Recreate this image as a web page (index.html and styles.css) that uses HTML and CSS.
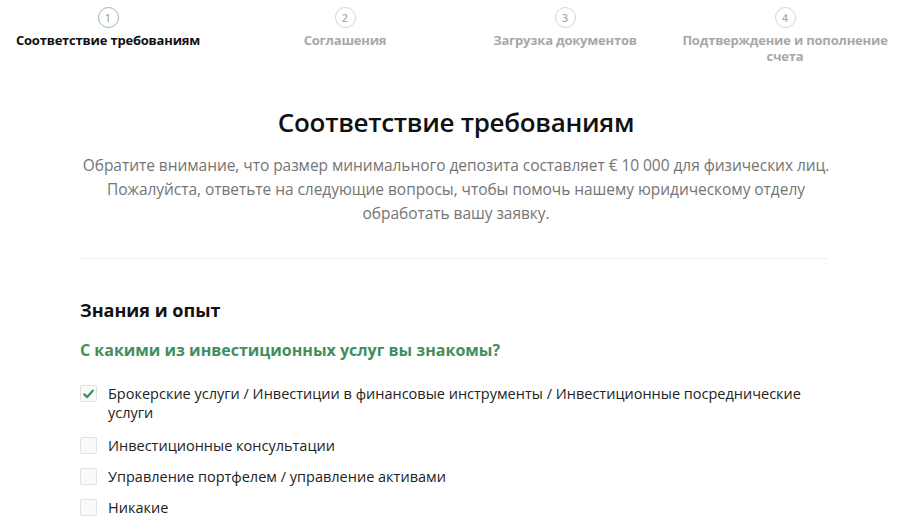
FILE: index.html
```html
<!DOCTYPE html>
<html lang="ru">
<head>
<meta charset="utf-8">
<title>Соответствие требованиям</title>
<link rel="stylesheet" href="styles.css">
</head>
<body>
<nav class="steps">
  <div class="step step-active step-first">
    <span class="step-num">1</span>
    <span class="step-label">Соответствие требованиям</span>
  </div>
  <div class="step">
    <span class="step-num">2</span>
    <span class="step-label">Соглашения</span>
  </div>
  <div class="step">
    <span class="step-num">3</span>
    <span class="step-label">Загрузка документов</span>
  </div>
  <div class="step">
    <span class="step-num">4</span>
    <span class="step-label">Подтверждение и пополнение счета</span>
  </div>
</nav>
<main class="content">
  <h1 class="title">Соответствие требованиям</h1>
  <p class="intro">Обратите внимание, что размер минимального депозита составляет € 10 000 для физических лиц. Пожалуйста, ответьте на следующие вопросы, чтобы помочь нашему юридическому отделу обработать вашу заявку.</p>
  <hr class="divider">
  <h2 class="section-title">Знания и опыт</h2>
  <h3 class="question">С какими из инвестиционных услуг вы знакомы?</h3>
  <ul class="options">
    <li class="option">
      <span class="box box-checked"><svg viewBox="0 0 16 16" width="16" height="16"><path d="M3.6 8.4 L6.6 11.3 L12.6 4.4" fill="none" stroke="#3f8f5e" stroke-width="2.4" stroke-linecap="round" stroke-linejoin="round"/></svg></span>
      <span class="option-text">Брокерские услуги / Инвестиции в финансовые инструменты / Инвестиционные посреднические услуги</span>
    </li>
    <li class="option">
      <span class="box"></span>
      <span class="option-text">Инвестиционные консультации</span>
    </li>
    <li class="option">
      <span class="box"></span>
      <span class="option-text">Управление портфелем / управление активами</span>
    </li>
    <li class="option">
      <span class="box"></span>
      <span class="option-text">Никакие</span>
    </li>
  </ul>
</main>
</body>
</html>
```

FILE: styles.css
```css
* { box-sizing: border-box; }
html, body { margin: 0; padding: 0; background: #fff; }
body {
  font-family: "Open Sans", "Noto Sans", sans-serif;
  color: #222;
}
.steps {
  display: grid;
  grid-template-columns: 235px 220px 220px 220px;
  padding-top: 7px;
}
.step {
  display: flex;
  flex-direction: column;
  align-items: center;
  text-align: center;
}
.step-first { padding-right: 19px; }
.step-num {
  width: 21px;
  height: 21px;
  border: 1px solid #d4d4d4;
  border-radius: 50%;
  display: flex;
  align-items: center;
  justify-content: center;
  font-size: 11px;
  font-weight: 600;
  color: #aaa;
  line-height: 1;
}
.step-active .step-num { border-color: #9fb3a6; color: #8a9a90; font-weight: 400; }
.step-label {
  margin-top: 4px;
  font-size: 13px;
  font-weight: 700;
  line-height: 16px;
  color: #a8a8a8;
  letter-spacing: -0.2px;
}
.step:last-child .step-label { width: 220px; }
.step-active .step-label { color: #111; }
.content {
  width: 752px;
  margin: 0 0 0 80px;
}
.title {
  margin: 40px 0 0;
  text-align: center;
  font-size: 26px;
  font-weight: 600;
  line-height: 36px;
  color: #111;
  letter-spacing: -0.3px;
}
.intro {
  margin: 13px 0 0;
  text-align: center;
  font-size: 15.5px;
  line-height: 24px;
  color: #757575;
  letter-spacing: -0.05px;
}
.divider {
  border: 0;
  border-top: 1px solid #f0f0f0;
  margin: 33px 0 0;
  width: 748px;
}
.section-title {
  margin: 38px 0 0;
  font-size: 18px;
  font-weight: 700;
  line-height: 26px;
  color: #111;
}
.question {
  margin: 15px 0 0;
  font-size: 16px;
  font-weight: 700;
  line-height: 24px;
  color: #3f8f5e;
}
.options {
  list-style: none;
  margin: 22px 0 0;
  padding: 0;
}
.option {
  display: flex;
  align-items: flex-start;
  gap: 11px;
  margin-bottom: 12px;
}
.option:first-child { margin-bottom: 14px; }
.box {
  flex: none;
  width: 17px;
  height: 17px;
  margin-top: 1px;
  border: 1px solid #e2e2e2;
  border-radius: 2px;
  background: #fafafa;
  display: flex;
  align-items: center;
  justify-content: center;
}
.box svg { display: block; }
.option-text {
  font-size: 14.5px;
  line-height: 19px;
  color: #222;
  max-width: 700px;
}
```
